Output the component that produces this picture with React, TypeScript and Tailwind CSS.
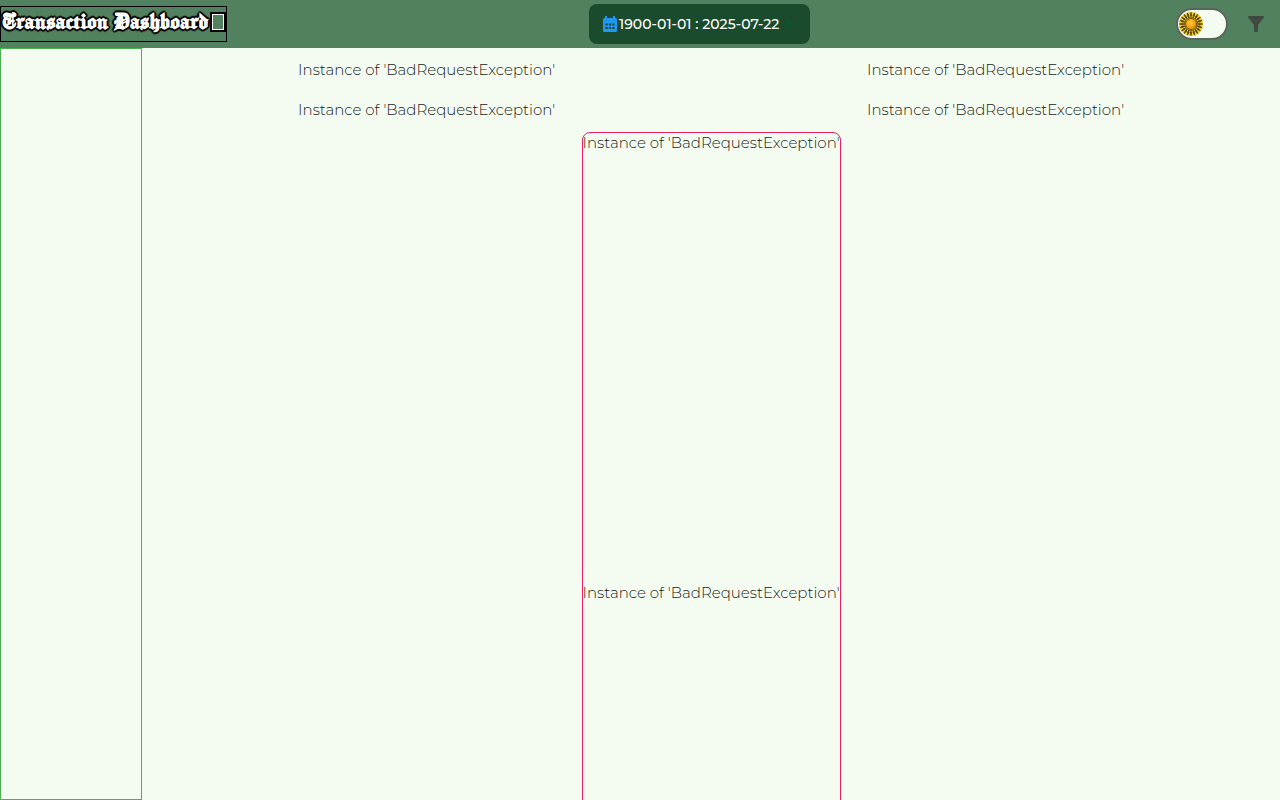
import React from 'react';

const ERROR_TEXT = "Instance of 'BadRequestException'";

const petals = Array.from({ length: 20 }, (_, i) => i * 18);

function Sunflower() {
  return (
    <svg viewBox="0 0 26 26" className="size-[26px]" aria-hidden="true">
      <defs>
        <radialGradient id="core" cx="45%" cy="40%" r="60%">
          <stop offset="0" stopColor="#ffc845" />
          <stop offset="0.6" stopColor="#f9a912" />
          <stop offset="1" stopColor="#d18a08" />
        </radialGradient>
      </defs>
      <circle cx="13" cy="13" r="12" fill="#ecca2a" />
      <circle cx="13" cy="13" r="8.6" fill="#3d3005" />
      {petals.map((a) => (
        <g key={a} transform={`rotate(${a} 13 13)`}>
          <path d="M13 1.300 L13.7 4.500 L12.3 4.500 Z" fill="#3d3005" stroke="#3d3005" strokeWidth=".5" />
          <path d="M13 3.500 L13.7 5.500 L13 7.200 L12.3 5.500 Z" fill="#f2cb22" transform="rotate(9 13 13)" />
          <circle cx="13" cy="7" r=".6" fill="#e6b91c" />
        </g>
      ))}
      <circle cx="13" cy="13" r="5.2" fill="url(#core)" />
    </svg>
  );
}

function CalendarIcon() {
  return (
    <svg viewBox="0 0 14 16" className="h-4 w-3.5 shrink-0" aria-hidden="true">
      <path
        fill="#2196f3"
        d="M2 0h2v2h6V0h2v2h.5A1.5 1.5 0 0 1 14 3.500V14.500A1.500 1.500 0 0 1 12.500 16h-11A1.500 1.500 0 0 1 0 14.500v-11A1.500 1.500 0 0 1 1.500 2H2z"
      />
      <path
        fill="#1b4b2d"
        d="M2.500 7.500h2.200v2H2.500zm3.400 0h2.200v2H5.900zm3.400 0h2.200v2H9.300zM2.500 11h2.200v2H2.500zm3.400 0h2.200v2H5.900zm3.400 0h2.200v2H9.300z"
      />
    </svg>
  );
}

function ErrorLine() {
  return <p className="text-center leading-5 whitespace-nowrap">{ERROR_TEXT}</p>;
}

export default function App() {
  const [sunny, setSunny] = React.useState(true);
  return (
    <div className="flex h-screen flex-col overflow-hidden bg-[#f4fbf1] font-['Montserrat','Inter',sans-serif] text-[15px] font-light text-[#191d19]">
      <header className="flex h-12 shrink-0 items-center justify-between bg-[#52815f]">
        <h1 className="flex h-9 w-[227px] items-center border border-black pb-1 font-['Manufacturing_Consent','UnifrakturCook','Liberation_Serif',serif] text-[25px] font-bold whitespace-nowrap text-white [text-shadow:1px_1px_1px_#000,-1px_-1px_1px_#000,1px_-1px_1px_#000,-1px_1px_1px_#000,2px_0_1px_#000,-2px_0_1px_#000,0_2px_1px_#000,0_-2px_1px_#000]">
          Transaction Dashboard
          <span className="mr-0.5 ml-auto h-4 w-3 border border-white outline-2 outline-black" aria-hidden="true" />
        </h1>

        <button
          type="button"
          className="flex h-10 w-[221px] items-center rounded-lg bg-[#1b4b2d] pl-3.5 text-sm font-medium whitespace-nowrap text-white"
        >
          <CalendarIcon />
          <span className="ml-0.5">1900-01-01 : 2025-07-22</span>
          <svg viewBox="0 0 8 4" className="ml-1.5 h-1 w-2" aria-hidden="true">
            <path d="M0 0h8L4 4z" fill="#075a2e" />
          </svg>
        </button>

        <div className="flex items-center gap-2 px-1">
          <button
            type="button"
            role="switch"
            aria-checked={sunny}
            aria-label="Light theme"
            onClick={() => setSunny(!sunny)}
            className={`flex h-8 w-[52px] items-center rounded-full border-2 border-[#5b655c] bg-[#f4fbf1] ${sunny ? 'justify-start' : 'justify-end'}`}
          >
            <Sunflower />
          </button>
          <button type="button" aria-label="Filter" className="flex size-10 items-center justify-center">
            <svg viewBox="0 0 16 16" className="size-4" aria-hidden="true">
              <path
                fill="#3f4941"
                d="M1 0h14c.9 0 1.300 1 .8 1.600L10 9v6a1 1 0 0 1-1 1H7a1 1 0 0 1-1-1V9L.2 1.600C-.3 1 .1 0 1 0z"
              />
            </svg>
          </button>
        </div>
      </header>

      <div className="grid min-h-0 flex-1 grid-cols-[1fr_8fr]">
        <aside className="border border-[#4caf50]" aria-label="Sidebar" />
        <main className="min-w-0 overflow-hidden pt-3">
          <div className="grid grid-cols-2 gap-y-5">
            <ErrorLine />
            <ErrorLine />
            <ErrorLine />
            <ErrorLine />
          </div>
          <section className="mx-auto mt-3 w-fit rounded-lg border border-[#e91e63]">
            <div className="h-[450px]">
              <ErrorLine />
            </div>
            <div className="h-[450px]">
              <ErrorLine />
            </div>
          </section>
        </main>
      </div>
    </div>
  );
}
